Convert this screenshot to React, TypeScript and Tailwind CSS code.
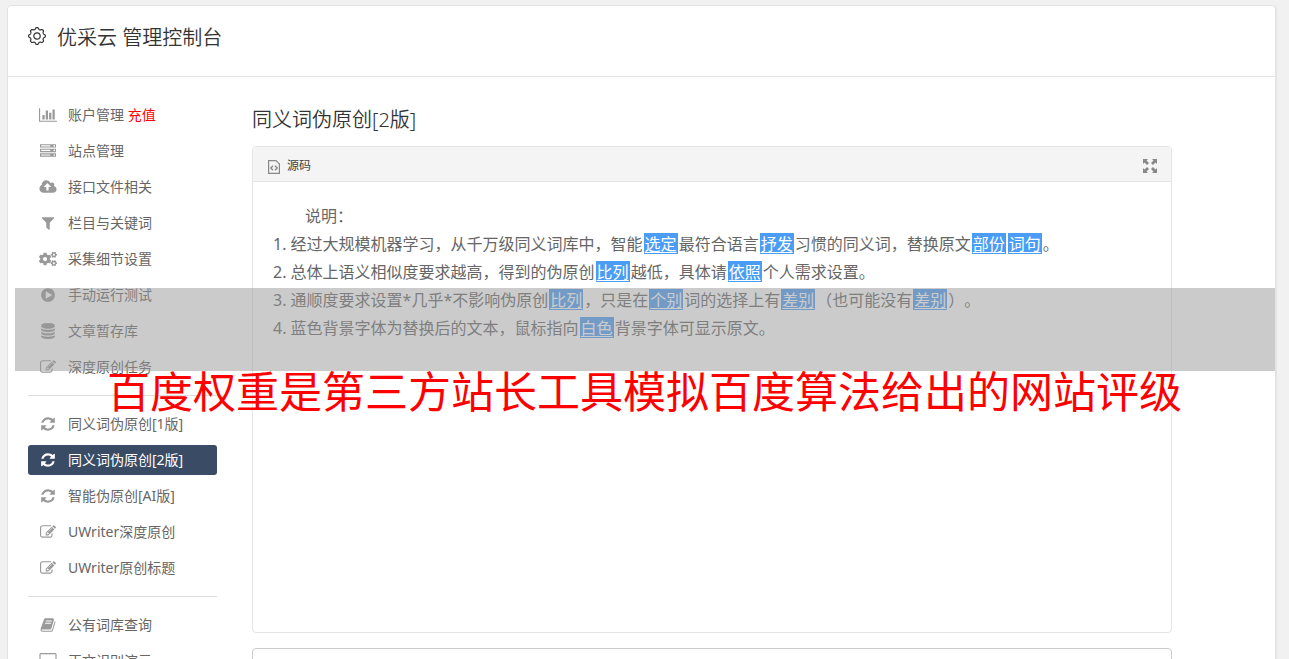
import clsx from "clsx";
import { ReactNode } from "react";
import { FaCogs } from "react-icons/fa";

const icons: Record<string, { box: string; d: string }> = {
  chart: {
    box: "0 0 2048 1792",
    d: "M640 896v512h-256v-512h256zm384-512v1024h-256v-1024h256zm1024 1152v128h-2048v-1536h128v1408h1920zm-640-896v768h-256v-768h256zm384-384v1152h-256v-1152h256z",
  },
  server: {
    box: "0 0 1792 1792",
    d: "M128 1408h1024v-128h-1024v128zm0-512h1024v-128h-1024v128zm1568 448q0-40-28-68t-68-28-68 28-28 68 28 68 68 28 68-28 28-68zm-1568-960h1024v-128h-1024v128zm1568 448q0-40-28-68t-68-28-68 28-28 68 28 68 68 28 68-28 28-68zm0-512q0-40-28-68t-68-28-68 28-28 68 28 68 68 28 68-28 28-68zm96 832v384h-1792v-384h1792zm0-512v384h-1792v-384h1792zm0-512v384h-1792v-384h1792z",
  },
  cloud: {
    box: "0 0 1920 1792",
    d: "M1280 864q0-14-9-23l-352-352q-9-9-23-9t-23 9l-351 351q-10 12-10 24 0 14 9 23t23 9h224v352q0 13 9.5 22.5t22.5 9.5h192q13 0 22.5-9.5t9.5-22.5v-352h224q13 0 22.5-9.5t9.5-22.5zm640 288q0 159-112.5 271.5t-271.5 112.5h-1088q-185 0-316.5-131.5t-131.5-316.5q0-130 70-240t188-165q-2-30-2-43 0-212 150-362t362-150q156 0 285.5 87t188.5 231q71-62 166-62 106 0 181 75t75 181q0 76-41 138 130 31 213.5 135.5t83.5 238.5z",
  },
  filter: {
    box: "0 0 1792 1792",
    d: "M1595 295q17 41-14 70l-493 493v742q0 42-39 59-13 5-25 5-27 0-45-19l-256-256q-19-19-19-45v-486l-493-493q-31-29-14-70 17-39 59-39h1280q42 0 59 39z",
  },
  play: {
    box: "0 0 1792 1792",
    d: "M896 128q209 0 385.5 103t279.5 279.5 103 385.5-103 385.5-279.5 279.5-385.5 103-385.5-103-279.5-279.5-103-385.5 103-385.5 279.5-279.5 385.5-103zm384 823q32-18 32-55t-32-55l-544-320q-31-19-64-1-32 19-32 56v640q0 37 32 56 16 8 32 8 17 0 32-9z",
  },
  database: {
    box: "0 0 1792 1792",
    d: "M896 768q237 0 443-43t325-127v170q0 69-103 128t-280 93.5-385 34.5-385-34.5-280-93.5-103-128v-170q119 84 325 127t443 43zm0 768q237 0 443-43t325-127v170q0 69-103 128t-280 93.5-385 34.5-385-34.5-280-93.5-103-128v-170q119 84 325 127t443 43zm0-384q237 0 443-43t325-127v170q0 69-103 128t-280 93.5-385 34.5-385-34.5-280-93.5-103-128v-170q119 84 325 127t443 43zm0-1152q208 0 385 34.5t280 93.5 103 128v128q0 69-103 128t-280 93.5-385 34.5-385-34.5-280-93.5-103-128v-128q0-69 103-128t280-93.5 385-34.5z",
  },
  edit: {
    box: "0 0 1792 1792",
    d: "M888 1184l116-116-152-152-116 116v56h96v96h56zm440-720q-16-16-33 1l-350 350q-17 17-1 33t33-1l350-350q17-17 1-33zm80 594v190q0 119-84.5 203.5t-203.5 84.5h-832q-119 0-203.5-84.5t-84.5-203.5v-832q0-119 84.5-203.5t203.5-84.5h832q63 0 117 25 15 7 18 23 3 17-9 29l-49 49q-14 14-32 8-23-6-45-6h-832q-66 0-113 47t-47 113v832q0 66 47 113t113 47h832q66 0 113-47t47-113v-126q0-13 9-22l64-64q15-15 35-7t20 29zm-96-738l288 288-672 672h-288v-288zm444 132l-92 92-288-288 92-92q28-28 68-28t68 28l152 152q28 28 28 68t-28 68z",
  },
  refresh: {
    box: "0 0 1792 1792",
    d: "M1639 1056q0 5-1 7-64 268-268 434.5t-478 166.5q-146 0-282.5-55t-243.5-157l-129 129q-19 19-45 19t-45-19-19-45v-448q0-26 19-45t45-19h448q26 0 45 19t19 45-19 45l-137 137q71 66 161 102t187 36q134 0 250-65t186-179q11-17 53-117 8-23 30-23h192q13 0 22.5 9.5t9.5 22.5zm25-800v448q0 26-19 45t-45 19h-448q-26 0-45-19t-19-45 19-45l138-138q-148-137-349-137-134 0-250 65t-186 179q-11 17-53 117-8 23-30 23h-199q-13 0-22.5-9.5t-9.5-22.5v-7q65-268 270-434.5t480-166.5q146 0 284 55.5t245 156.5l130-129q19-19 45-19t45 19 19 45z",
  },
  book: {
    box: "0 0 1792 1792",
    d: "M1703 478q40 57 18 129l-275 906q-19 64-76.5 107.5t-122.5 43.5h-923q-77 0-148.5-53.5t-99.5-131.5q-24-67-2-127 0-4 3-27t4-37q1-8-3-21.5t-3-19.5q2-11 8-21t16.5-23.5 16.5-23.5q23-38 45-91.5t30-91.5q3-10 .5-30t-.5-28q3-11 17-28t17-23q21-36 42-92t25-90q1-9-2.5-32t.5-28q4-13 22-30.5t22-22.5q19-26 42.5-84.5t27.5-96.5q1-8-3-25.5t-2-26.5q2-8 9-18t18-23 17-21q8-12 16.5-30.5t15-35 16-36 19.5-32 26.5-23.5 36-11.5 47.5 5.5l-1 3q38-9 51-9h761q74 0 114 56t18 130l-274 906q-36 119-71.5 153.5t-128.5 34.5h-869q-27 0-38 15-11 16-1 43 24 70 144 70h923q29 0 56-15.5t35-41.5l300-987q7-22 5-57 38 15 59 43zm-1064 2q-4 13 2 22.5t20 9.5h608q13 0 25.5-9.5t16.5-22.5l21-64q4-13-2-22.5t-20-9.5h-608q-13 0-25.5 9.5t-16.5 22.5zm-83 256q-4 13 2 22.5t20 9.5h608q13 0 25.5-9.5t16.5-22.5l21-64q4-13-2-22.5t-20-9.5h-608q-13 0-25.5 9.5t-16.5 22.5z",
  },
  desktop: {
    box: "0 0 1920 1792",
    d: "M1792 992v-832q0-13-9.5-22.5t-22.5-9.5h-1600q-13 0-22.5 9.5t-9.5 22.5v832q0 13 9.5 22.5t22.5 9.5h1600q13 0 22.5-9.5t9.5-22.5zm128-832v1088q0 66-47 113t-113 47h-544q0 37 16 77.5t32 71 16 43.5q0 26-19 45t-45 19h-512q-26 0-45-19t-19-45q0-14 16-44t32-70 16-78h-544q-66 0-113-47t-47-113v-1088q0-66 47-113t113-47h1600q66 0 113 47t47 113z",
  },
};

interface SideItem {
  name: string;
  icon: string;
  badge?: string;
  active?: boolean;
}

const sidebar: SideItem[][] = [
  [
    { name: "账户管理", icon: "chart", badge: "充值" },
    { name: "站点管理", icon: "server" },
    { name: "接口文件相关", icon: "cloud" },
    { name: "栏目与关键词", icon: "filter" },
    { name: "采集细节设置", icon: "cogs" },
    { name: "手动运行测试", icon: "play" },
    { name: "文章暂存库", icon: "database" },
    { name: "深度原创任务", icon: "edit" },
  ],
  [
    { name: "同义词伪原创[1版]", icon: "refresh" },
    { name: "同义词伪原创[2版]", icon: "refresh", active: true },
    { name: "智能伪原创[AI版]", icon: "refresh" },
    { name: "UWriter深度原创", icon: "edit" },
    { name: "UWriter原创标题", icon: "edit" },
  ],
  [
    { name: "公有词库查询", icon: "book" },
    { name: "正文识别演示", icon: "desktop" },
  ],
];

const SideIcon = ({ name }: { name: string }) => {
  if (name === "cogs") return <FaCogs className="h-[18px] w-[18px]" />;
  return (
    <svg viewBox={icons[name].box} fill="currentColor" className="h-4 w-[18px]">
      <path d={icons[name].d} />
    </svg>
  );
};

const SidebarItem = ({ item }: { item: SideItem }) => (
  <li>
    <a
      href="#"
      className={clsx(
        "flex h-[30px] items-center rounded-[3px] pl-[11px] text-sm",
        item.active ? "bg-[#3a4b66] text-white" : "text-[#666]"
      )}
    >
      <span className={clsx("flex w-[29px] shrink-0", item.active ? "text-white" : "text-[#999]")}>
        <SideIcon name={item.icon} />
      </span>
      <span className="whitespace-nowrap">
        {item.name}
        {item.badge && <span className="text-[#f00]"> {item.badge}</span>}
      </span>
    </a>
  </li>
);

const Sidebar = () => (
  <nav className="w-[189px] shrink-0">
    {sidebar.map((group, index) => (
      <ul
        key={index}
        className={clsx("flex flex-col gap-[6px]", index > 0 && "mt-[13px] border-t border-[#ddd] pt-[13px]")}
      >
        {group.map((item) => (
          <SidebarItem key={item.name} item={item} />
        ))}
      </ul>
    ))}
  </nav>
);

const Word = ({ children }: { children: ReactNode }) => (
  <span className="mx-px inline-block h-[21px] bg-[#4a9cf5] px-px align-baseline leading-[22px] text-white underline underline-offset-2">
    {children}
  </span>
);

// eight rounded teeth around the centre
const gearPath =
  Array.from({ length: 97 }, (_, i) => {
    const angle = (i / 96) * Math.PI * 2;
    const radius = 7.6 + 0.8 * Math.tanh(2 * Math.cos(8 * angle));
    const x = 9 + radius * Math.sin(angle);
    const y = 9 - radius * Math.cos(angle);
    return `${i ? "L" : "M"}${x.toFixed(2)} ${y.toFixed(2)}`;
  }).join("") + "Z";

const GearIcon = () => (
  <svg viewBox="0 0 18 18" fill="none" stroke="currentColor" strokeWidth="1.2" className="h-[18px] w-[18px]">
    <path d={gearPath} strokeLinejoin="round" />
    <circle cx="9" cy="9" r="3.2" />
  </svg>
);

const SourceIcon = () => (
  <svg viewBox="0 0 12 14" fill="none" stroke="currentColor" className="h-[14px] w-3 text-[#888]">
    <path strokeWidth="1.2" d="M.6.6h7.4l3.4 3.4v9.4H.6z" />
    <path strokeWidth="1.4" d="M5 5.8 2.8 8 5 10.2M7 5.8 9.2 8 7 10.2" />
  </svg>
);

const ExpandIcon = () => (
  <svg viewBox="0 0 14 14" fill="currentColor" className="h-[14px] w-[14px]">
    <path d="M0 0h5L3.5 1.5 6 4 4 6 1.5 3.5 0 5zM14 0v5l-1.5-1.5L10 6 8 4l2.500-2.500L9 0zM0 14V9l1.500 1.500L4 8l2 2-2.500 2.500L5 14zM14 14H9l1.500-1.500L8 10l2-2 2.500 2.500L14 9z" />
  </svg>
);

const Editor = () => (
  <section className="min-h-[487px] rounded border border-[#e5e5e5] bg-white">
    <div className="flex h-[35px] items-center justify-between rounded-t border-b border-[#e5e5e5] bg-[#f4f4f4] pl-[15px] pr-[14px] pt-[3px]">
      <button type="button" className="flex items-end gap-[7px] text-xs text-[#444]">
        <SourceIcon />
        源码
      </button>
      <button type="button" aria-label="全屏" className="text-[#888]">
        <ExpandIcon />
      </button>
    </div>
    <div className="px-5 pt-5 text-base leading-7 text-[#666] [text-spacing-trim:space-all]">
      <p className="indent-8">说明：</p>
      <p>
        1. 经过大规模机器学习，从千万级同义词库中，智能<Word>选定</Word>最符合语言<Word>抒发</Word>
        习惯的同义词，替换原文<Word>部份</Word><Word>词句</Word>。
      </p>
      <p>
        2. 总体上语义相似度要求越高，得到的伪原创<Word>比列</Word>越低，具体请<Word>依照</Word>个人需求设置。
      </p>
      <p>
        3. 通顺度要求设置*几乎*不影响伪原创<Word>比列</Word>，只是在<Word>个别</Word>词的选择上有<Word>差别</Word>
        （也可能没有<Word>差别</Word>）。
      </p>
      <p>
        4. 蓝色背景字体为替换后的文本，鼠标指向<Word>白色</Word>背景字体可显示原文。
      </p>
    </div>
  </section>
);

export default function App() {
  return (
    <div
      lang="zh-CN"
      className="relative h-screen overflow-hidden bg-[#f1f1f1] pl-[7px] pr-[13px] pt-[5px] font-['Noto_Sans','Noto_Sans_CJK_SC',sans-serif]"
    >
      <div className="min-h-screen rounded border border-[#e3e3e3] bg-white shadow-[1px_0_0_#e5e5e5]">
        <header className="flex h-[71px] items-start gap-[11px] border-b border-[#e5e5e5] pl-5 pt-4 text-[#333]">
          <span className="flex h-7 items-center">
            <GearIcon />
          </span>
          <h1 className="text-xl leading-8 font-[350]">优采云 管理控制台</h1>
        </header>
        <div className="flex gap-[35px] pl-5 pr-[103px] pt-[23px]">
          <Sidebar />
          <main className="min-w-0 flex-1">
            <h2 className="pb-3 pt-[6px] text-xl text-[#333] font-[350]">同义词伪原创[2版]</h2>
            <Editor />
            <textarea aria-label="内容" className="mt-[15px] block h-40 w-full resize-none rounded border border-[#ccc]" />
          </main>
        </div>
      </div>

      <div className="absolute left-[15px] right-[14px] top-[288px] h-[83px] bg-[#979797]/50" />
      <div className="absolute inset-x-0 top-[362px] whitespace-nowrap text-center text-[43px] leading-[60px] text-[#f00]">
        百度权重是第三方站长工具模拟百度算法给出的网站评级
      </div>
    </div>
  );
}
